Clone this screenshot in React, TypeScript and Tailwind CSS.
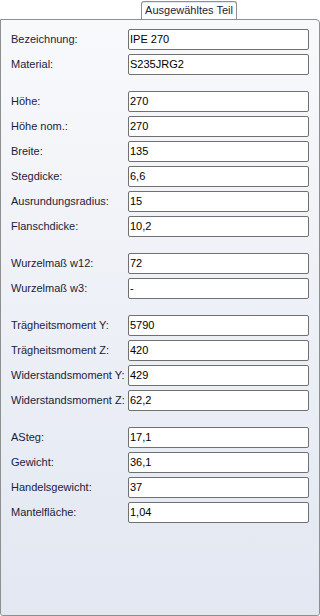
const groups: [string, string][][] = [
  [
    ["Bezeichnung:", "IPE 270"],
    ["Material:", "S235JRG2"],
  ],
  [
    ["Höhe:", "270"],
    ["Höhe nom.:", "270"],
    ["Breite:", "135"],
    ["Stegdicke:", "6,6"],
    ["Ausrundungsradius:", "15"],
    ["Flanschdicke:", "10,2"],
  ],
  [
    ["Wurzelmaß w12:", "72"],
    ["Wurzelmaß w3:", "-"],
  ],
  [
    ["Trägheitsmoment Y:", "5790"],
    ["Trägheitsmoment Z:", "420"],
    ["Widerstandsmoment Y:", "429"],
    ["Widerstandsmoment Z:", "62,2"],
  ],
  [
    ["ASteg:", "17,1"],
    ["Gewicht:", "36,1"],
    ["Handelsgewicht:", "37"],
    ["Mantelfläche:", "1,04"],
  ],
];

function Row({ label, value }: { label: string; value: string }) {
  return (
    <div className="flex items-center h-[21px]">
      <span className="w-[117px] shrink-0 text-[#1c1c3c] leading-none">{label}</span>
      <div className="w-[181px] h-[21px] bg-white border border-[#707070] rounded-[2px] flex items-center pl-[1px] text-black leading-none">
        {value}
      </div>
    </div>
  );
}

export default function App() {
  return (
    <div
      className="w-[320px] h-[616px] bg-white text-[11px] pt-px"
      style={{ fontFamily: '"Liberation Sans", Arial, sans-serif' }}
    >
      <div className="ml-[141px] w-[96px] h-[18px] bg-white border border-b-0 border-[#8e8f8f] rounded-t-[3px] flex items-center justify-center text-[#1c1c3c] relative z-10 shadow-[inset_0_1px_0_#dfe9f5]">
        Ausgewähltes Teil
      </div>
      <div className="h-[597px] border border-[#8e8f8f] rounded-tr-[4px] rounded-b-[3px] bg-gradient-to-b from-[#f8f9fb] to-[#e2e7f1] pt-[9px] pl-[10px] flex flex-col gap-[16px]">
        {groups.map((g, i) => (
          <div key={i} className="flex flex-col gap-[4px]">
            {g.map(([l, v]) => (
              <Row key={l} label={l} value={v} />
            ))}
          </div>
        ))}
      </div>
    </div>
  );
}
